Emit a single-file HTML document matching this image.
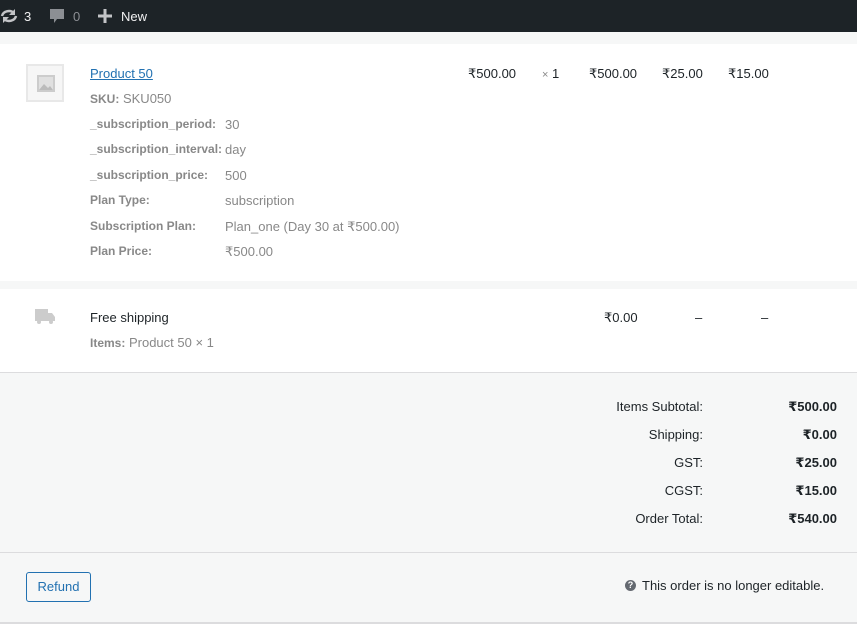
<!DOCTYPE html>
<html><head><meta charset="utf-8"><style>
*{margin:0;padding:0;box-sizing:border-box}
body{width:857px;height:628px;background:#fff;font-family:"Liberation Sans","DejaVu Sans",sans-serif;font-size:13px;color:#1d2327;position:relative;overflow:hidden}
.a{position:absolute;white-space:nowrap}
.bar{position:absolute;left:0;top:0;width:857px;height:32px;background:#1d2327;color:#f0f0f1}
.g{color:#888}
.lbl{color:#888;font-weight:bold;font-size:12px}
.b{font-weight:bold;color:#1d2327}
.r{text-align:right}
</style></head><body>
<div class="bar">
<svg class="a" style="left:0;top:8px" width="18" height="16" viewBox="0 0 18 16"><path d="M2 8a7 6 0 0 1 12-3" stroke="#c3c4c7" stroke-width="2.5" fill="none"/><path d="M16 8a7 6 0 0 1-12 3" stroke="#c3c4c7" stroke-width="2.5" fill="none"/><path d="M15 1v6h-6z M3 15v-6h6z" fill="#c3c4c7"/></svg>
<div class="a" style="left:24px;top:9px;color:#f0f0f1">3</div>
<svg class="a" style="left:49px;top:8px" width="16" height="16" viewBox="0 0 16 16"><path d="M1 1h14v10H8l-3 4v-4H1z" fill="#8c8f94"/></svg>
<div class="a" style="left:73px;top:9px;color:#8c8f94">0</div>
<svg class="a" style="left:98px;top:9px" width="14" height="14"><path d="M7 0v14M0 7h14" stroke="#c3c4c7" stroke-width="3"/></svg>
<div class="a" style="left:121px;top:9px;color:#f0f0f1">New</div>
</div>
<div class="a" style="left:0;top:32px;width:857px;height:12px;background:#f6f7f7"></div>
<div class="a" style="left:0;top:281px;width:857px;height:8px;background:#f6f7f7"></div>
<div class="a" style="left:0;top:372px;width:857px;height:252px;background:#f6f7f7;border-top:1px solid #dcdcde;border-bottom:2px solid #dcdcde"></div>
<div class="a" style="left:0;top:552px;width:857px;height:1px;background:#dcdcde"></div>

<div class="a" style="left:26px;top:64px;width:38px;height:38px;border:2px solid #e8e8e8;background:#f6f6f6"></div>
<svg class="a" style="left:37px;top:75px" width="18" height="17"><rect width="18" height="17" fill="#ccc"/><rect x="2" y="2" width="14" height="13" fill="#e0e0e0"/><path d="M2 15l5-6 4 4 2-2 3 4z" fill="#bbb"/></svg>
<div class="a" style="left:90px;top:66px;color:#2271b1;text-decoration:underline">Product 50</div>
<div class="a" style="left:90px;top:91px"><span class="lbl">SKU:</span> <span class="g">SKU050</span></div>
<div class="a lbl" style="left:90px;top:117px">_subscription_period:</div><div class="a g" style="left:225px;top:117px">30</div>
<div class="a lbl" style="left:90px;top:142px">_subscription_interval:</div><div class="a g" style="left:225px;top:142px">day</div>
<div class="a lbl" style="left:90px;top:168px">_subscription_price:</div><div class="a g" style="left:225px;top:168px">500</div>
<div class="a lbl" style="left:90px;top:193px">Plan Type:</div><div class="a g" style="left:225px;top:193px">subscription</div>
<div class="a lbl" style="left:90px;top:219px">Subscription Plan:</div><div class="a g" style="left:225px;top:219px">Plan_one (Day 30 at ₹500.00)</div>
<div class="a lbl" style="left:90px;top:244px">Plan Price:</div><div class="a g" style="left:225px;top:244px">₹500.00</div>
<div class="a" style="left:468px;top:66px">₹500.00</div>
<div class="a" style="left:542px;top:66px"><span class="g" style="font-size:11px">×</span> 1</div>
<div class="a" style="left:589px;top:66px">₹500.00</div>
<div class="a" style="left:662px;top:66px">₹25.00</div>
<div class="a" style="left:728px;top:66px">₹15.00</div>

<svg class="a" style="left:35px;top:309px" width="20" height="16"><path d="M0 0h13v12H0z M13 4h4l3 4v4h-7z" fill="#ccc"/><circle cx="4" cy="13" r="2" fill="#ccc"/><circle cx="16" cy="13" r="2" fill="#ccc"/></svg>
<div class="a" style="left:90px;top:310px">Free shipping</div>
<div class="a" style="left:90px;top:335px"><span class="lbl">Items:</span> <span class="g">Product 50 × 1</span></div>
<div class="a" style="left:604px;top:310px">₹0.00</div>
<div class="a" style="left:695px;top:310px">–</div>
<div class="a" style="left:761px;top:310px">–</div>

<div class="a r" style="right:154px;top:393px;line-height:28px">Items Subtotal:<br>Shipping:<br>GST:<br>CGST:<br>Order Total:</div>
<div class="a r b" style="right:20px;top:393px;line-height:28px">₹500.00<br>₹0.00<br>₹25.00<br>₹15.00<br>₹540.00</div>

<div class="a" style="left:26px;top:572px;width:65px;height:30px;border:1px solid #2271b1;border-radius:3px;color:#2271b1;text-align:center;line-height:28px;background:#f6f7f7">Refund</div>
<div class="a" style="left:625px;top:580px;width:11px;height:11px;border-radius:50%;background:#646970;color:#fff;font-size:9px;font-weight:bold;text-align:center;line-height:11px">?</div>
<div class="a" style="left:642px;top:578px;color:#1d2327">This order is no longer editable.</div>
</body></html>
